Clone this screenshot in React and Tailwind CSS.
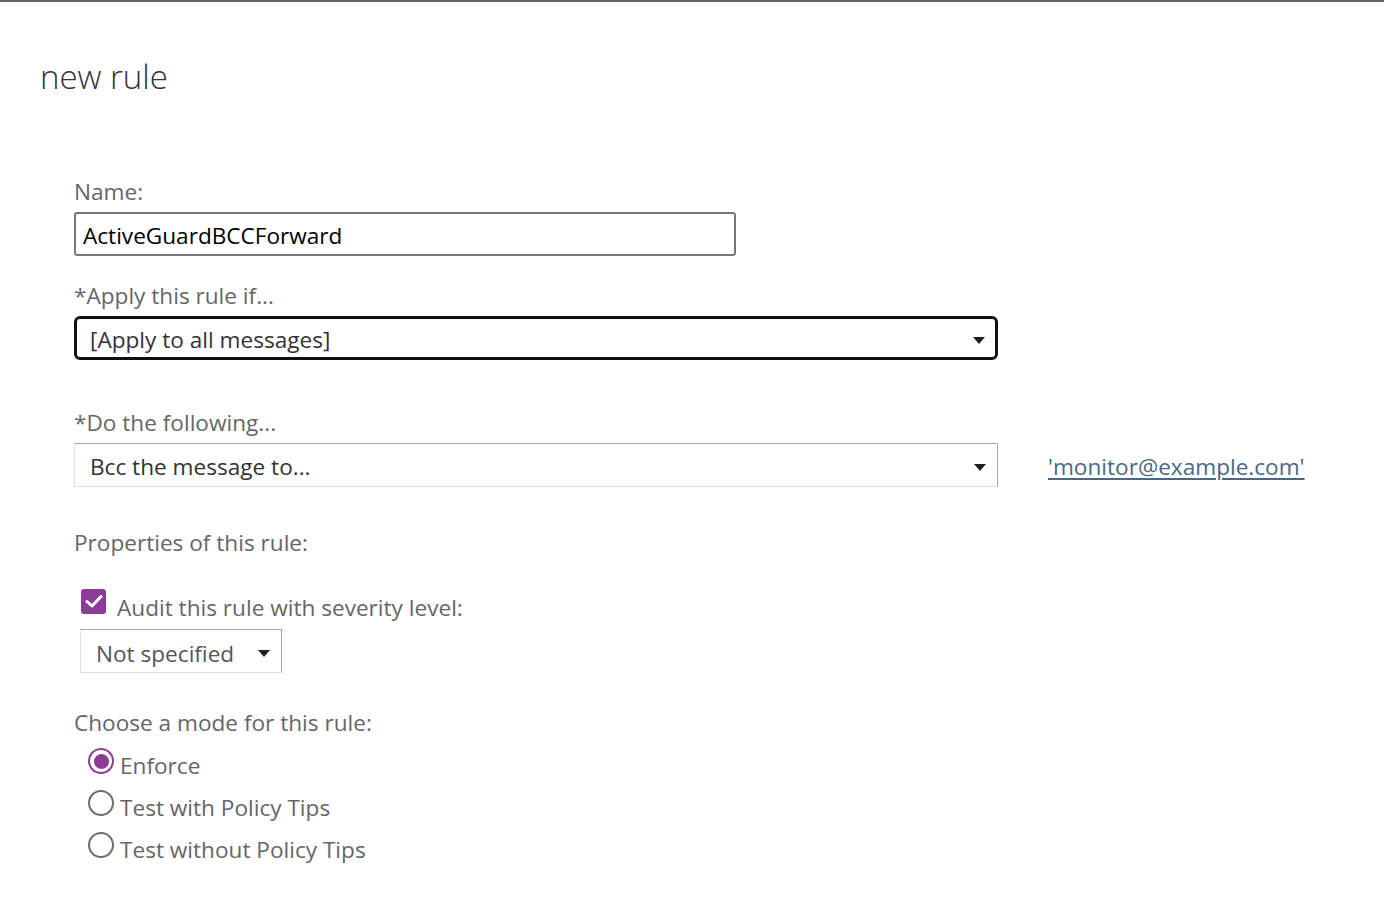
const Arrow = ({ offset = "mt-[4px]" }) => (
  <svg width="12" height="7" viewBox="0 0 12 7" className={"shrink-0 " + offset}>
    <path d="M0 0 L12 0 L6 7 Z" fill="#1f1f1f" />
  </svg>
);

const Select = ({ value, focused, className = "", textClass = "mt-[5px]" }) => (
  <div
    className={
      "flex items-center justify-between h-[44px] bg-white " +
      (focused
        ? "border-[3px] border-[#111] rounded-[6px] pl-[13px] pr-[10px] "
        : "border border-t-[#a9a9a9] border-r-[#a9a9a9] border-l-[#dde1e6] border-b-[#dde1e6] pl-[15px] pr-[11px] ") +
      className
    }
  >
    <span className={"text-[22.6px] text-[#333] leading-none " + textClass}>{value}</span>
    <Arrow offset={focused ? "mt-[5px]" : "mt-[4px]"} />
  </div>
);

const Label = ({ children, className = "" }) => (
  <label className={"pt-[2px] text-[22.6px] leading-[26px] text-[#666] " + className}>{children}</label>
);

const Radio = ({ label, checked }) => (
  <div className="flex items-center h-[42px] pl-[14px]">
    <span
      className={
        "w-[26px] h-[26px] rounded-full border-2 flex items-center justify-center -mt-[10px] mr-[6px] " +
        (checked ? "border-[#8b3d98]" : "border-[#6e6e6e]")
      }
    >
      {checked && <span className="w-[15px] h-[15px] rounded-full bg-[#8b3d98]" />}
    </span>
    <span className="text-[22.6px] text-[#666]">{label}</span>
  </div>
);

export default function App() {
  return (
    <div
      className="min-h-[900px] bg-white border-t-2 border-[#666]"
      style={{ fontFamily: '"Open Sans", "Noto Sans", sans-serif' }}
    >
      <h1 className="pl-[40px] pt-[55px] text-[33px] leading-[40px] font-light text-[#333]">
        new rule
      </h1>

      <div className="pl-[74px] pt-[80px] flex flex-col">
        <Label>Name:</Label>
        <div className="mt-[7px] w-[662px] h-[44px] border-2 border-[#777] rounded-[3px] flex items-center pl-[7px]">
          <span className="text-[22.6px] text-black leading-none mt-[5px]">ActiveGuardBCCForward</span>
        </div>

        <Label className="mt-[25px]">*Apply this rule if...</Label>
        <Select value="[Apply to all messages]" focused className="mt-[7px] w-[924px]" />

        <Label className="mt-[48px]">*Do the following...</Label>
        <div className="mt-[7px] flex items-center">
          <Select value="Bcc the message to..." className="w-[924px]" />
          <a href="#" className="ml-[50px] text-[22.6px] text-[#4a6884] underline underline-offset-[3px] mt-[3px]">
            'monitor@example.com'
          </a>
        </div>

        <Label className="mt-[41px]">Properties of this rule:</Label>

        <div className="mt-[37px] flex items-center h-[28px] pl-[7px]">
          <span className="w-[25px] h-[25px] rounded-[3px] bg-[#8a3c96] flex items-center justify-center -mt-[12px] mr-[11px]">
            <svg width="18" height="15" viewBox="0 0 18 15">
              <path d="M2 7.5 L7 12 L16 2.5" fill="none" stroke="#fff" strokeWidth="3" strokeLinecap="round" strokeLinejoin="round" />
            </svg>
          </span>
          <span className="text-[22.6px] text-[#666] mt-[2px]">Audit this rule with severity level:</span>
        </div>

        <div className="mt-[8px] ml-[6px]">
          <Select value="Not specified" className="w-[202px]" textClass="text-[#555] mt-[7px]" />
        </div>

        <Label className="mt-[35px]">Choose a mode for this rule:</Label>
        <div className="mt-[9px] flex flex-col">
          <Radio label="Enforce" checked />
          <Radio label="Test with Policy Tips" />
          <Radio label="Test without Policy Tips" />
        </div>
      </div>
    </div>
  );
}
